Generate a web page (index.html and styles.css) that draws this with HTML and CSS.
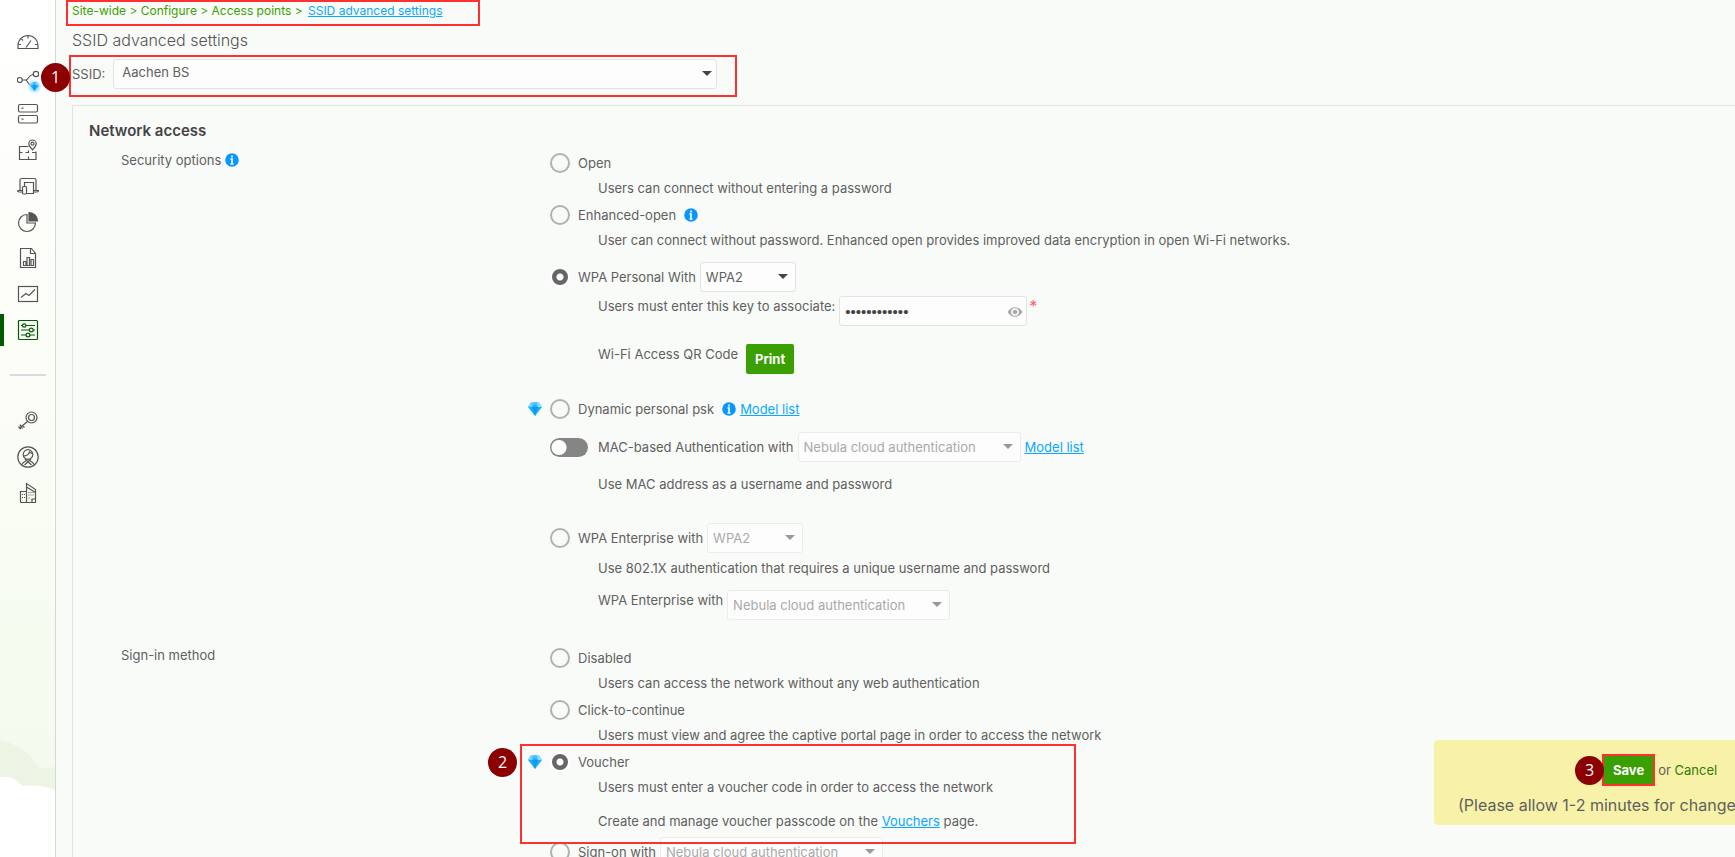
FILE: index.html
```html
<!DOCTYPE html>
<html lang="en">

<head>
    <meta charset="UTF-8" />
    <meta name="viewport" content="width=device-width, initial-scale=1.0" />
    <title>SSID advanced settings</title>
    <link rel="stylesheet" href="styles.css">
</head>

<body>

    <!-- shared shapes -->
    <svg class="defs" aria-hidden="true">
        <symbol id="info" viewBox="0 0 14 14">
            <circle cx="7" cy="7" r="6.8" fill="#0a96ff" />
            <path d="M7 2.400v2M5.500 6h1.500v5M5.500 11h3" fill="none" stroke="#fff" stroke-width="1.600" />
        </symbol>
        <symbol id="gem" viewBox="0 0 14 14">
            <path d="M3 .500h8l3 4.500-7 9L0 5z" fill="#1cb0fb" />
            <path d="M3 .500L0 5h4l1.500-4.500z" fill="#6fd3ff" />
            <path d="M11 .500l3 4.500h-4L8.500 .500z" fill="#8fe0ff" />
            <path d="M4 5h6l-3 9z" fill="#0a9af0" />
            <path d="M5 .500h4l1 4.500-3-2-3 2z" fill="#42c2fd" />
        </symbol>
    </svg>

    <nav class="sidebar">
        <a href="#" title="Dashboard">
            <svg viewBox="0 0 22 22"><path d="M1 17.500v-3a10 10 0 0 1 20 0v3z" /><path d="M11 4.500v3M1.500 13.500H4M18 13.500h2.500M4.500 8l1.500 1.500M9 16.500l5-7" /></svg>
        </a>
        <a href="#" title="Topology">
            <svg viewBox="0 0 22 22"><circle cx="2.800" cy="13" r="2.500" /><circle cx="19" cy="7" r="2.700" /><path d="M5.500 13h3c3 0 3-5 7.500-5.500M8.500 13c2 0 2 4 5 5" /></svg>
            <svg class="gem-mini"><use href="#gem" /></svg>
        </a>
        <a href="#" title="Devices">
            <svg viewBox="0 0 22 22"><rect x="1.500" y="1.500" width="19" height="7.500" rx="1.500" /><rect x="1.500" y="12.500" width="19" height="7.500" rx="1.500" /><path d="M4.500 5.200h2M4.500 16.200h2" /></svg>
        </a>
        <a href="#" title="Map">
            <svg viewBox="0 0 22 22"><path d="M11.500 7.500H2.500v13h16.500v-8M2.500 13.500h3M8.500 13.500h3v-2M11.500 20.500v-3M15 13.500h4" /><path d="M15.500 11c-2-2.500-3.700-4.200-3.700-6.300a3.700 3.700 0 0 1 7.400 0c0 2.100-1.700 3.800-3.700 6.300z" /><circle cx="15.500" cy="4.700" r="1.500" /></svg>
        </a>
        <a href="#" title="Clients">
            <svg viewBox="0 0 22 22"><path d="M3 15V5q0-1.500 1.500-1.500h13Q19 3.500 19 5v10M.500 15.500h5M16.500 15.500h5q0 1.500-2 1.500h-3M.500 15.500q0 1.500 2 1.500h3" /><path d="M7.500 11V7.500h9v11h-7" /><rect x="5.500" y="11.500" width="4" height="7.500" rx="1" /></svg>
        </a>
        <a href="#" title="Applications">
            <svg viewBox="0 0 22 22"><path d="M10 3.500a8.500 8.500 0 1 0 8.500 8.500H10z" /><path class="solid" d="M12 1.500v8.500h8.500A8.500 8.500 0 0 0 12 1.500z" /></svg>
        </a>
        <a href="#" title="Reports">
            <svg viewBox="0 0 22 22"><path d="M3.500 1.500h11l4 5v14h-15zM13.500 1.500v5h5" /><path d="M6.500 18.500v-4h2.500v4zM10 18.500v-8h2.500v8zM14 18.500v-6h2.500v6z" /></svg>
        </a>
        <a href="#" title="Monitor">
            <svg viewBox="0 0 22 22"><rect x="1.500" y="3.500" width="19" height="15" /><path d="M4 14.500l5-4 3 2 6-6" /></svg>
        </a>
        <a href="#" title="Configure" class="active">
            <svg viewBox="0 0 22 22"><rect x="1.500" y="1.500" width="19" height="19" rx="1" /><path d="M4 6.500h1.500M9 6.500h9M4 11h8M16.500 11H18M4 16h5M13 16h5" /><circle cx="7.200" cy="6.500" r="1.700" /><circle cx="14.300" cy="11" r="1.900" /><circle cx="11" cy="16" r="1.900" /></svg>
        </a>
        <hr>
        <a href="#" title="License">
            <svg viewBox="0 0 22 22"><circle cx="14.500" cy="7.500" r="5.500" /><circle cx="14.500" cy="7.500" r="3" /><path d="M10.500 11.500L2 18.500M5.500 15.500l2 2M3 14.500l2.500 4M1.500 16.500L4 19" /></svg>
        </a>
        <a href="#" title="Administration">
            <svg viewBox="0 0 22 22"><circle cx="11" cy="11" r="10.200" /><circle cx="11" cy="8.500" r="4.800" /><path d="M6.500 10c3 0 5.500-2 6-4l2.500 1.500M5 18.500c.500-2.500 3.500-3.500 6-5 2.500 1.500 5.500 2.500 6 5M8 13l6.500 6M14 13l-6.500 6" /></svg>
        </a>
        <a href="#" title="Organization">
            <svg viewBox="0 0 22 22"><path d="M3.500 20.500v-11h6M9.500 20.500v-19l9 6v13h-15M15 20.500v-3.500h3.500M9.500 5l9 5.500" /><path d="M5 12.500h3M5 15.500h3M11.500 10.500H17M11.500 13H17M11.500 16h2" stroke-dasharray="1 1" /></svg>
        </a>
        <svg class="clouds" viewBox="0 0 55 116" preserveAspectRatio="none">
            <path d="M0 0c18 2 31 13 40 28q7-3 15-1v89H0z" fill="#ecf5e4" />
            <path d="M0 36q14-2 22 9 20-2 33 4v67H0z" fill="#fff" />
        </svg>
    </nav>

    <main>
        <div class="breadcrumbs">
            <a href="#">Site-wide</a> &gt; <a href="#">Configure</a> &gt; <a href="#">Access points</a> &gt;
            <a href="#" class="link">SSID advanced settings</a>
            <span class="mark"></span>
        </div>

        <h1>SSID advanced settings</h1>

        <div class="ssid-row">
            <label for="ssid">SSID:</label>
            <span class="select wide">
                <select id="ssid"><option>Aachen BS</option></select>
            </span>
            <span class="mark"></span>
            <span class="step">1</span>
        </div>

        <section class="panel">
            <h2>Network access</h2>

            <div class="setting">
                <div class="setting-name">Security options <svg class="info"><use href="#info" /></svg></div>
                <div class="options">
                    <div class="option">
                        <input type="radio" name="security" id="open">
                        <label for="open">Open</label>
                    </div>
                    <p>Users can connect without entering a password</p>

                    <div class="option">
                        <input type="radio" name="security" id="enhanced">
                        <label for="enhanced">Enhanced-open</label>
                        <svg class="info"><use href="#info" /></svg>
                    </div>
                    <p>User can connect without password. Enhanced open provides improved data encryption in open Wi-Fi networks.</p>

                    <div class="option tall gap-s">
                        <input type="radio" name="security" id="wpa" checked>
                        <label for="wpa">WPA Personal With</label>
                        <span class="select small">
                            <select aria-label="WPA version"><option>WPA2</option></select>
                        </span>
                    </div>
                    <div class="sub key">
                        <label for="psk">Users must enter this key to associate:</label>
                        <span class="password">
                            <input type="password" id="psk" value="nebula123456">
                            <svg viewBox="0 0 16 12"><path fill-rule="evenodd" d="M.500 6C4-.300 12-.300 15.500 6 12 12.300 4 12.300.500 6zM8 2.200a3.800 3.800 0 1 0 0 7.600 3.800 3.800 0 0 0 0-7.600z" fill="#aaa" /><circle cx="8" cy="6" r="2.300" fill="#aaa" /></svg>
                        </span>
                        <span class="required">*</span>
                    </div>
                    <div class="sub qr">
                        <span>Wi-Fi Access QR Code</span>
                        <button type="button">Print</button>
                    </div>

                    <div class="option gap-l">
                        <svg class="gem"><use href="#gem" /></svg>
                        <input type="radio" name="security" id="dppsk">
                        <label for="dppsk">Dynamic personal psk</label>
                        <svg class="info"><use href="#info" /></svg>
                        <a href="#" class="link">Model list</a>
                    </div>

                    <div class="option tall gap-s">
                        <input type="checkbox" class="toggle" id="mac">
                        <label for="mac">MAC-based Authentication with</label>
                        <span class="select disabled">
                            <select aria-label="MAC authentication server" disabled><option>Nebula cloud authentication</option></select>
                        </span>
                        <a href="#" class="link">Model list</a>
                    </div>
                    <p class="gap-s">Use MAC address as a username and password</p>

                    <div class="option tall gap-xl">
                        <input type="radio" name="security" id="enterprise">
                        <label for="enterprise">WPA Enterprise with</label>
                        <span class="select small disabled">
                            <select aria-label="WPA Enterprise version" disabled><option>WPA2</option></select>
                        </span>
                    </div>
                    <p class="gap-xs">Use 802.1X authentication that requires a unique username and password</p>
                    <div class="sub server">
                        <label for="radius">WPA Enterprise with</label>
                        <span class="select disabled">
                            <select id="radius" disabled><option>Nebula cloud authentication</option></select>
                        </span>
                    </div>
                </div>
            </div>

            <div class="setting">
                <div class="setting-name">Sign-in method</div>
                <div class="options">
                    <div class="option">
                        <input type="radio" name="signin" id="disabled">
                        <label for="disabled">Disabled</label>
                    </div>
                    <p>Users can access the network without any web authentication</p>

                    <div class="option">
                        <input type="radio" name="signin" id="click">
                        <label for="click">Click-to-continue</label>
                    </div>
                    <p>Users must view and agree the captive portal page in order to access the network</p>

                    <div class="voucher">
                        <div class="option">
                            <svg class="gem"><use href="#gem" /></svg>
                            <input type="radio" name="signin" id="voucher" checked>
                            <label for="voucher">Voucher</label>
                        </div>
                        <p>Users must enter a voucher code in order to access the network</p>
                        <p class="gap-s">Create and manage voucher passcode on the <a href="#" class="link">Vouchers</a> page.</p>
                        <span class="mark"></span>
                        <span class="step">2</span>
                    </div>

                    <div class="option tall">
                        <input type="radio" name="signin" id="signon">
                        <label for="signon">Sign-on with</label>
                        <span class="select disabled">
                            <select aria-label="Sign-on server" disabled><option>Nebula cloud authentication</option></select>
                        </span>
                    </div>
                </div>
            </div>
        </section>
    </main>

    <div class="save-bar">
        <div class="save-row">
            <span class="step">3</span>
            <button type="button">Save</button>
            <span>or <a href="#">Cancel</a></span>
        </div>
        <div class="save-note">(Please allow 1-2 minutes for changes</div>
    </div>

</body>

</html>
```

FILE: styles.css
```css
* {
    box-sizing: border-box;
}

body {
    margin: 0;
    height: 100vh;
    display: flex;
    overflow: hidden;
    background-color: #f9fbf8;
    color: #606060;
    font-family: Inter, "Open Sans", sans-serif;
    font-size: 13px;
    font-weight: 400;
    line-height: 20px;
}

.defs {
    position: absolute;
    width: 0;
    height: 0;
}

input,
select,
button {
    font: inherit;
    color: inherit;
}

/* sidebar */
.sidebar {
    position: relative;
    width: 56px;
    flex-shrink: 0;
    padding-top: 24px;
    border-right: 1px solid #d3d8d0;
    background: linear-gradient(#fff, #fbfdf6 45%, #f2faec);
}

.sidebar a {
    position: relative;
    height: 36px;
    display: flex;
    align-items: center;
    justify-content: center;
    color: #555;
}

.sidebar a svg {
    width: 22px;
    height: 22px;
    fill: none;
    stroke: currentColor;
    stroke-width: 1.2;
}

.sidebar .solid {
    fill: currentColor;
}

.sidebar a .gem-mini {
    position: absolute;
    left: 30px;
    top: 22px;
    width: 9px;
    height: 9px;
    stroke: none;
    border-radius: 50%;
    background-color: #a5e0ff;
    box-shadow: 0 0 3px 1px #a5e0ff;
}

.sidebar .active {
    color: #005a00;
}

.sidebar .active::before {
    content: '';
    position: absolute;
    left: 0;
    top: 2px;
    width: 4px;
    height: 32px;
    background-color: #005a00;
}

.sidebar hr {
    margin: 26px 9px 27px 10px;
    border: 0;
    border-top: 2px solid #d8dbdf;
}

.clouds {
    position: absolute;
    left: 0;
    bottom: 0;
    width: 100%;
    height: 116px;
}

/* page */
main {
    flex: 1;
    min-width: 0;
    padding-left: 16px;
}

.link {
    color: #0aa8ff;
    text-decoration: underline;
}

.breadcrumbs {
    position: relative;
    width: max-content;
    padding: 1px 0;
    color: #3d9f00;
    font-size: 12px;
}

.breadcrumbs a {
    color: #3d9f00;
    text-decoration: none;
}

.breadcrumbs .link {
    margin-left: 2px;
    color: #0aa8ff;
    text-decoration: underline;
}

h1 {
    margin: 8px 0 9px;
    color: #555;
    font-size: 16px;
    font-weight: 300;
}

h2 {
    margin: 0 0 9px;
    color: #444;
    font-size: 15px;
    font-weight: 600;
}

/* red frames and numbered steps */
.mark {
    position: absolute;
    border: 2px solid #ff3030;
    pointer-events: none;
}

.step {
    position: absolute;
    width: 29px;
    height: 29px;
    border-radius: 50%;
    background-color: #8b0000;
    color: #fff;
    font-family: "Open Sans", sans-serif;
    font-size: 16px;
    line-height: 29px;
    text-align: center;
}

.breadcrumbs .mark {
    left: -6px;
    right: -38px;
    top: 0;
    bottom: -4px;
}

.ssid-row {
    position: relative;
    display: flex;
    align-items: center;
    gap: 8px;
    width: 39%;
}

.ssid-row .mark {
    left: -3px;
    right: -16px;
    top: -4px;
    bottom: -8px;
}

.ssid-row .step {
    left: -31px;
    top: 4px;
}

/* selects */
.select {
    position: relative;
    display: inline-block;
    width: 223px;
}

.select.small {
    width: 96px;
}

.select.wide {
    flex: 1;
    margin-right: 4px;
}

.select select {
    appearance: none;
    display: block;
    width: 100%;
    height: 30px;
    padding: 0 24px 0 5px;
    border: 1px solid #e2e4e1;
    border-radius: 3px;
    background-color: #fcfdfc;
}

.select.wide select {
    padding: 0 24px 4px 8px;
}

.select::after {
    content: '';
    position: absolute;
    right: 8px;
    top: 12px;
    border: 5px solid transparent;
    border-top-color: #444;
    border-bottom: 0;
}

.select.wide::after {
    right: 5px;
}

.select.disabled select {
    border-color: #ebedea;
    color: #aaa;
    opacity: 1;
}

.select.disabled::after {
    border-top-color: #999;
}

/* settings */
.panel {
    margin-top: 16px;
    padding: 15px 18px 0 16px;
    border: 1px solid #e0e3df;
    border-width: 1px 0 0 1px;
}

.setting {
    display: grid;
    grid-template-columns: 1fr 3fr;
    margin: 0 0 25px 32px;
}

.setting-name {
    display: flex;
    align-items: center;
    gap: 4px;
    height: 20px;
}

.options {
    padding-left: 30px;
}

.info {
    width: 14px;
    height: 14px;
}

.option {
    position: relative;
    display: flex;
    align-items: center;
    height: 26px;
    gap: 4px;
}

.option.tall {
    height: 30px;
}

.option .info {
    margin-left: 4px;
}

.options p {
    margin: 0 0 2px;
    padding-left: 48px;
    line-height: 24px;
}

.options .gap-xs {
    margin-top: 3px;
}

.options .gap-s {
    margin-top: 10px;
}

.options .gap-l {
    margin-top: 22px;
}

.options .gap-xl {
    margin-top: 27px;
}

.gem {
    position: absolute;
    left: -22px;
    width: 14px;
    height: 14px;
}

input[type="radio"] {
    appearance: none;
    width: 20px;
    height: 20px;
    margin: 0 4px 0 0;
    border: 2px solid #b0b2af;
    border-radius: 50%;
}

input[type="radio"]:checked {
    border: 2px solid #fff;
    background: radial-gradient(circle, #fff 3px, #666 4px);
}

.toggle {
    appearance: none;
    width: 38px;
    height: 19px;
    margin: 0 6px 0 0;
    border-radius: 10px;
    background: radial-gradient(circle at 9px, #fff 7px, #858585 8px);
}

.sub {
    display: flex;
    gap: 4px;
    padding-left: 48px;
}

.key {
    margin-top: 4px;
}

.qr {
    gap: 8px;
    margin-top: 18px;
}

.server {
    margin-top: 10px;
}

.password {
    position: relative;
    width: 188px;
}

.password input {
    width: 100%;
    height: 30px;
    padding: 0 24px 0 5px;
    border: 1px solid #e2e4e1;
    border-radius: 3px;
    background-color: #fcfdfc;
    color: #444;
    font-family: "Liberation Sans", sans-serif;
    font-size: 15px;
}

.password svg {
    position: absolute;
    right: 4px;
    top: 10px;
    width: 16px;
    height: 12px;
}

.required {
    margin-left: -2px;
    color: #ff6070;
    font-size: 16px;
}

button {
    height: 30px;
    padding: 0 9px;
    border: 0;
    border-radius: 2px;
    background-color: #3a9f00;
    color: #fff;
    font-weight: 700;
}

.voucher {
    position: relative;
    margin-bottom: 4px;
}

.voucher .mark {
    left: -30px;
    top: -5px;
    width: 556px;
    bottom: -11px;
    z-index: 1;
}

.voucher .step {
    left: -62px;
    top: -1px;
}

/* save bar */
.save-bar {
    position: fixed;
    right: 0;
    bottom: 32px;
    width: 301px;
    height: 85px;
    padding: 14px 0 0 24px;
    overflow: hidden;
    border-radius: 4px 0 0 4px;
    background-color: #f7f2a8;
}

.save-row {
    position: relative;
    display: flex;
    align-items: center;
    gap: 3px;
    padding-left: 144px;
}

.save-row button {
    height: 32px;
    border: 2px solid #ff3030;
    border-radius: 0;
}

.save-row .step {
    left: 117px;
}

.save-row a {
    color: #2f7d00;
    text-decoration: none;
}

.save-note {
    margin-top: 9px;
    font-size: 16px;
    white-space: nowrap;
}
```
